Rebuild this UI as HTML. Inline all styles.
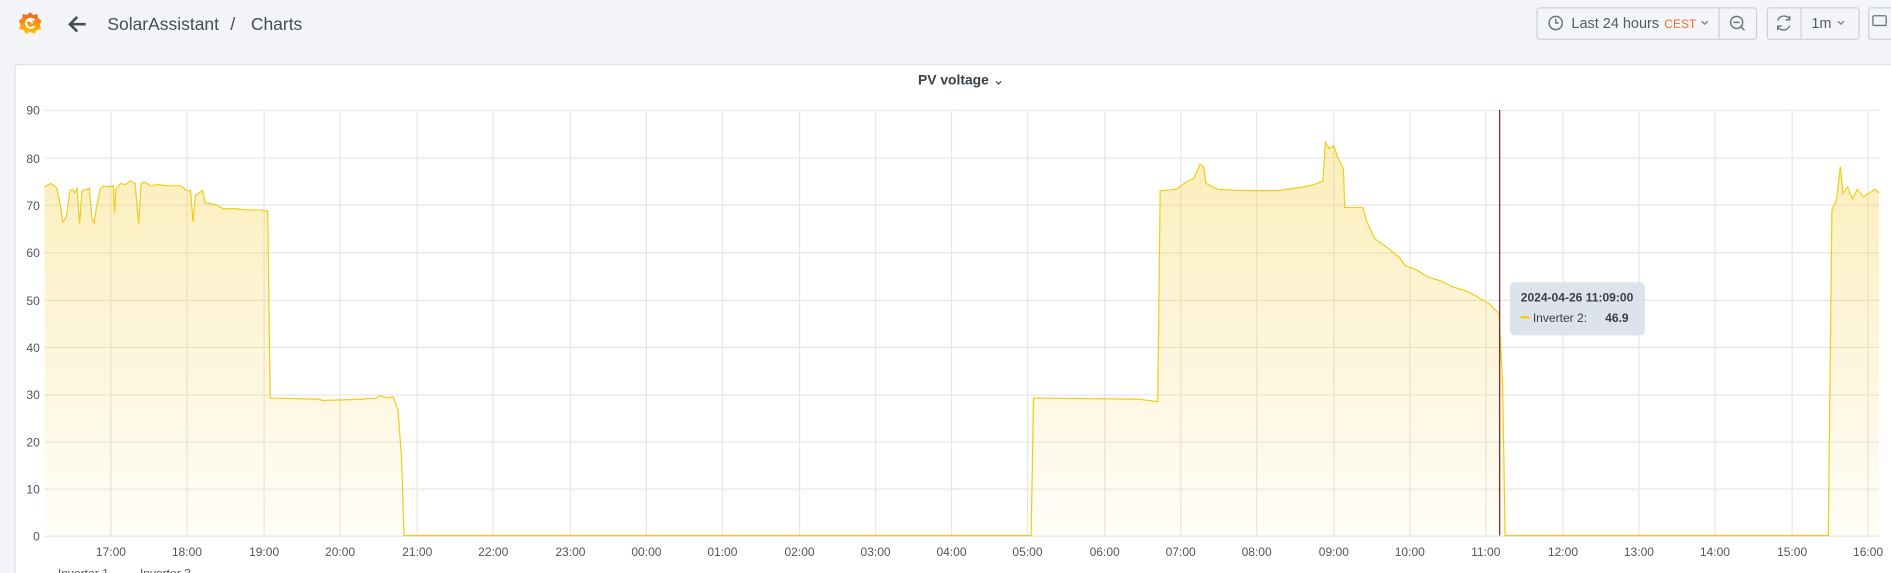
<!DOCTYPE html>
<html><head><meta charset="utf-8"><style>
html,body{margin:0;padding:0;background:#f4f5f8;overflow:hidden}
svg{display:block}
text{font-family:"Liberation Sans",sans-serif}
</style></head><body>
<svg width="1891" height="573" viewBox="0 0 1568 475" xmlns="http://www.w3.org/2000/svg">
<defs>
<linearGradient id="fg" x1="0" y1="0" x2="0" y2="1">
<stop offset="0" stop-color="#f5d24a" stop-opacity="0.38"/>
<stop offset="1" stop-color="#f5d24a" stop-opacity="0.04"/>
</linearGradient>
<linearGradient id="lg" x1="0" y1="0" x2="0" y2="1">
<stop offset="0" stop-color="#f05a28"/><stop offset="1" stop-color="#ffc800"/>
</linearGradient>
</defs>
<rect width="1568" height="475" fill="#f4f5f8"/>
<g transform="translate(25,19)">
<path d="M0,-9 L2.5,-6.5 L6,-7.5 L6.5,-4 L9.5,-2 L8,1.5 L9,5 L5.5,6 L3.5,9 L0,7.5 L-3.5,9 L-5.5,6 L-9,5 L-8,1.5 L-9.5,-2 L-6.5,-4 L-6,-7.5 L-2.5,-6.5 Z" fill="url(#lg)"/>
<path d="M3.5,2.5 A3.8,3.8 0 1 1 3.5,-2 M1,0.5 A1.4,1.4 0 1 0 -1.2,-1.2" fill="none" stroke="#fff" stroke-width="1.6"/>
</g>
<path d="M71,20 H58 M64,14 L58,20 L64,26" fill="none" stroke="#464c54" stroke-width="2.2"/>
<text x="89" y="25" font-size="14.5" fill="#464c54">SolarAssistant</text>
<text x="191" y="25" font-size="14.5" fill="#464c54">/</text>
<text x="208" y="25" font-size="14.5" fill="#464c54">Charts</text>
<rect x="1274.5" y="6.5" width="182" height="26" rx="2" fill="#f4f5f8" stroke="#ccd1d9"/>
<line x1="1425.5" y1="7" x2="1425.5" y2="32" stroke="#ccd1d9"/>
<circle cx="1290" cy="19" r="5.5" fill="none" stroke="#6e747c" stroke-width="1.2"/>
<path d="M1290,15.5 V19 H1292.5" fill="none" stroke="#6e747c" stroke-width="1.2"/>
<text x="1303" y="23" font-size="12" fill="#555b63">Last 24 hours</text>
<text x="1380" y="23" font-size="10" fill="#f06f30">CEST</text>
<path d="M1411,17.5 l2.5,2.5 l2.5,-2.5" fill="none" stroke="#6e747c" stroke-width="1"/>
<circle cx="1440" cy="18.5" r="5" fill="none" stroke="#6e747c" stroke-width="1.2"/>
<path d="M1437.5,18.5 h5 M1443.5,22 l3,3" stroke="#6e747c" stroke-width="1.2"/>
<rect x="1465.5" y="6.5" width="76" height="26" rx="2" fill="#f4f5f8" stroke="#ccd1d9"/>
<line x1="1493.5" y1="7" x2="1493.5" y2="32" stroke="#ccd1d9"/>
<path d="M1484,16 A5.5,5.5 0 0 0 1474,17 M1474,22 A5.5,5.5 0 0 0 1484,21 M1484,13 v3.5 h-3.5 M1474,25 v-3.5 h3.5" fill="none" stroke="#6e747c" stroke-width="1.1"/>
<text x="1502" y="23" font-size="12" fill="#555b63">1m</text>
<path d="M1524,17.5 l2.5,2.5 l2.5,-2.5" fill="none" stroke="#6e747c" stroke-width="1"/>
<rect x="1549.5" y="6.5" width="30" height="26" rx="2" fill="#f4f5f8" stroke="#ccd1d9"/>
<rect x="1553" y="13" width="11" height="8" rx="1" fill="none" stroke="#6e747c" stroke-width="1.1"/>
<rect x="12.5" y="53.5" width="1570" height="440" rx="3" fill="#fff" stroke="#dde1e6"/>
<text x="797" y="70" font-size="11.5" font-weight="bold" fill="#3a3f45" text-anchor="middle">PV voltage <tspan font-weight="normal">⌄</tspan></text>
<g stroke="#e6e6e6" stroke-width="1">
<path d="M37,91.5H1558M37,131H1558M37,170H1558M37,209.5H1558M37,249H1558M37,288H1558M37,327.5H1558M37,366.5H1558M37,405.5H1558M37,444.5H1558"/>
<path d="M92,91V444M155,91V444M219,91V444M282,91V444M346,91V444M409,91V444M473,91V444M536,91V444M599,91V444M663,91V444M726,91V444M789,91V444M852,91V444M916,91V444M979,91V444M1042,91V444M1106,91V444M1169,91V444M1232,91V444M1296,91V444M1359,91V444M1422,91V444M1486,91V444M1549,91V444"/>
</g>
<g font-size="10" fill="#555" text-anchor="end">
<text x="33" y="95">90</text><text x="33" y="135">80</text><text x="33" y="174">70</text><text x="33" y="213">60</text><text x="33" y="253">50</text><text x="33" y="292">40</text><text x="33" y="331">30</text><text x="33" y="370">20</text><text x="33" y="409">10</text><text x="33" y="448">0</text>
</g>
<g font-size="10" fill="#555" text-anchor="middle">
<text x="92" y="461">17:00</text><text x="155" y="461">18:00</text><text x="219" y="461">19:00</text><text x="282" y="461">20:00</text><text x="346" y="461">21:00</text><text x="409" y="461">22:00</text><text x="473" y="461">23:00</text><text x="536" y="461">00:00</text><text x="599" y="461">01:00</text><text x="663" y="461">02:00</text><text x="726" y="461">03:00</text><text x="789" y="461">04:00</text><text x="852" y="461">05:00</text><text x="916" y="461">06:00</text><text x="979" y="461">07:00</text><text x="1042" y="461">08:00</text><text x="1106" y="461">09:00</text><text x="1169" y="461">10:00</text><text x="1232" y="461">11:00</text><text x="1296" y="461">12:00</text><text x="1359" y="461">13:00</text><text x="1422" y="461">14:00</text><text x="1486" y="461">15:00</text><text x="1549" y="461">16:00</text>
</g>
<text x="48" y="479" font-size="10" fill="#555">Inverter 1</text>
<text x="116" y="479" font-size="10" fill="#555">Inverter 2</text>
<path d="M37,155 L42,152 47,156 50,170 52,184 55,180 58,158 60,157 62,160 64,156 66,186 68,158 72,157 74,156 76,180 78,185 80,172 83,157 86,154 90,155 94,154 95,177 96,157 100,152 104,153 108,150 112,152 115,186 117,152 120,151 125,154 130,153 140,154 150,154 155,158 158,158 160,184 162,162 165,160 168,158 170,168 175,169 180,170 185,173 195,173 205,174 215,174 222,175 224,330 265,331 267,332 300,331 312,330 315,328 318,329 322,330 326,329 330,340 333,380 335,444 855,444 857,330 945,331 960,333 962,158 975,157 985,150 990,148 995,136 998,138 1000,152 1010,157 1030,158 1060,158 1080,155 1090,153 1097,150 1099,118 1102,123 1106,121 1109,130 1114,140 1115,172 1130,172 1133,183 1140,198 1150,205 1160,213 1165,220 1175,224 1185,230 1195,233 1205,238 1215,241 1225,246 1235,252 1243,260 1246,320 1248,444 1516,444 1519,174 1523,165 1526,138 1528,160 1532,155 1536,165 1540,157 1545,163 1550,160 1555,157 1558,160" fill="none" stroke="#f2cc0c" stroke-width="1"/>
<path d="M37,155 L42,152 47,156 50,170 52,184 55,180 58,158 60,157 62,160 64,156 66,186 68,158 72,157 74,156 76,180 78,185 80,172 83,157 86,154 90,155 94,154 95,177 96,157 100,152 104,153 108,150 112,152 115,186 117,152 120,151 125,154 130,153 140,154 150,154 155,158 158,158 160,184 162,162 165,160 168,158 170,168 175,169 180,170 185,173 195,173 205,174 215,174 222,175 224,330 265,331 267,332 300,331 312,330 315,328 318,329 322,330 326,329 330,340 333,380 335,444 855,444 857,330 945,331 960,333 962,158 975,157 985,150 990,148 995,136 998,138 1000,152 1010,157 1030,158 1060,158 1080,155 1090,153 1097,150 1099,118 1102,123 1106,121 1109,130 1114,140 1115,172 1130,172 1133,183 1140,198 1150,205 1160,213 1165,220 1175,224 1185,230 1195,233 1205,238 1215,241 1225,246 1235,252 1243,260 1246,320 1248,444 1516,444 1519,174 1523,165 1526,138 1528,160 1532,155 1536,165 1540,157 1545,163 1550,160 1555,157 1558,160 L1558,444 L37,444 Z" fill="url(#fg)"/>
<line x1="1243.5" y1="91" x2="1243.5" y2="444" stroke="#8b1a1a" stroke-width="1"/>
<rect x="1252" y="234" width="112" height="44" rx="4" fill="#dde3ec"/>
<text x="1261" y="250" font-size="10" font-weight="bold" fill="#3a3f45">2024-04-26 11:09:00</text>
<line x1="1261" y1="263" x2="1268" y2="263" stroke="#f2cc0c" stroke-width="2"/>
<text x="1271" y="267" font-size="10" fill="#3a3f45">Inverter 2:</text>
<text x="1331" y="267" font-size="10" font-weight="bold" fill="#3a3f45">46.9</text>
</svg>
</body></html>
